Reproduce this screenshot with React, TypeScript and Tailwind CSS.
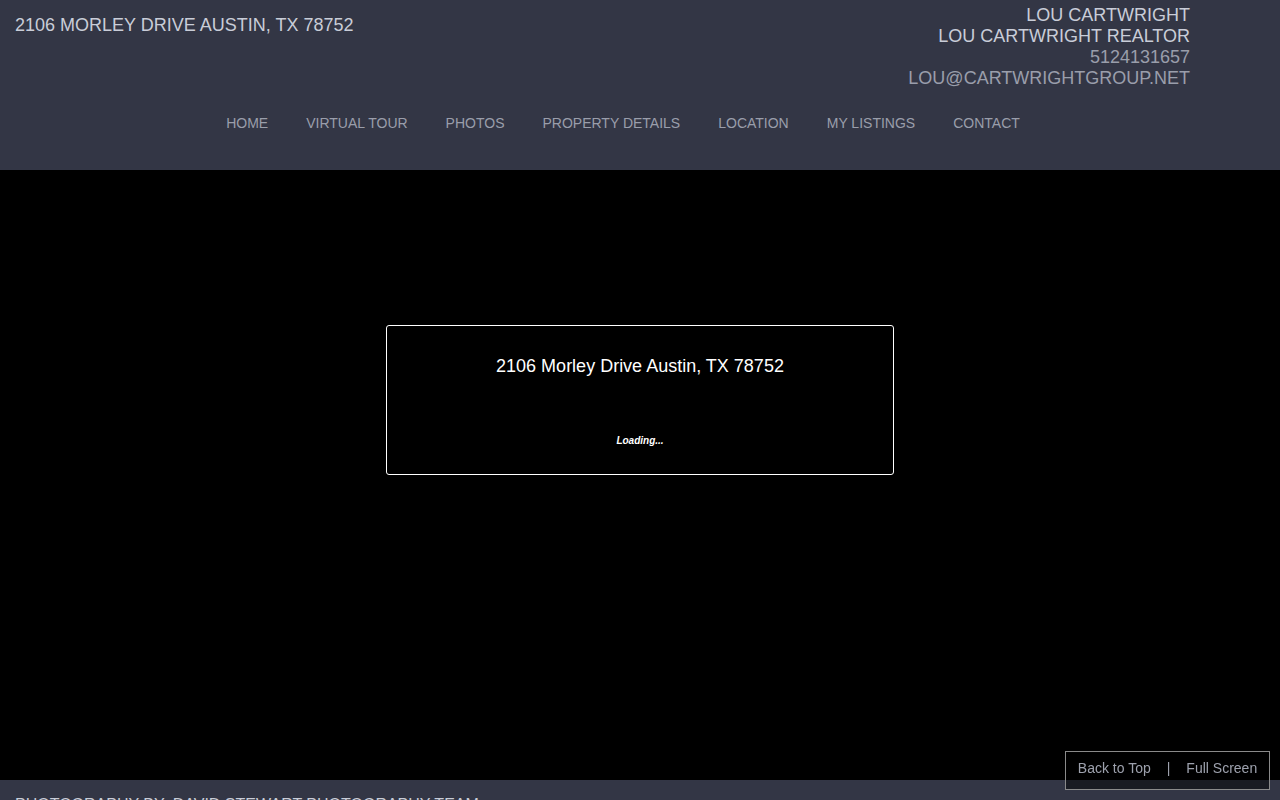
const navItems = ["HOME", "VIRTUAL TOUR", "PHOTOS", "PROPERTY DETAILS", "LOCATION", "MY LISTINGS", "CONTACT"]

export default function App() {
  return (
    <div className="relative min-h-screen bg-black font-['Liberation_Sans',Arial,sans-serif]">
      <header className="h-[170px] bg-[#333645] px-[15px]">
        <div className="flex items-start justify-between">
          <h1 className="pt-[15px] text-[18px] font-normal leading-[21px] text-[#c9cdd8]">
            2106 MORLEY DRIVE AUSTIN, TX 78752
          </h1>
          <div className="pr-[75px] pt-[5px] text-right text-[18px] leading-[21px]">
            <div className="text-[#c9cdd8]">LOU CARTWRIGHT</div>
            <div className="text-[#c9cdd8]">LOU CARTWRIGHT REALTOR</div>
            <div className="text-[#9a9eab]">5124131657</div>
            <div className="text-[#9a9eab]">LOU@CARTWRIGHTGROUP.NET</div>
          </div>
        </div>
        <nav className="mt-[24px] flex justify-center gap-[38px] pr-[34px] text-[14px] leading-[20px] text-[#9a9eab]">
          {navItems.map((item) => (
            <a key={item} href="#" className="hover:text-white">
              {item}
            </a>
          ))}
        </nav>
      </header>

      <main className="flex h-[610px] justify-center bg-black pt-[155px]">
        <div className="flex h-[150px] w-[508px] flex-col items-center rounded-[3px] border border-white">
          <h2 className="pt-[28px] text-[18px] leading-[24px] text-white">2106 Morley Drive Austin, TX 78752</h2>
          <p className="mt-[55px] text-[10px] font-bold italic text-white">Loading...</p>
        </div>
      </main>

      <footer className="h-[40px] bg-[#333645] px-[15px] pt-[15px] text-[16px] leading-[20px] text-[#c9cdd8]">
        PHOTOGRAPHY BY: DAVID STEWART PHOTOGRAPHY TEAM
      </footer>

      <div className="fixed bottom-[10px] right-[10px] flex h-[39px] w-[205px] items-center justify-center border border-[#8a8a8a] bg-black/50 pb-[4px] text-[14px] text-[#9da1ad]">
        <a href="#">Back to Top</a>
        <span className="mx-[16px] text-[#9da1ad]">|</span>
        <a href="#">Full Screen</a>
      </div>
    </div>
  )
}
